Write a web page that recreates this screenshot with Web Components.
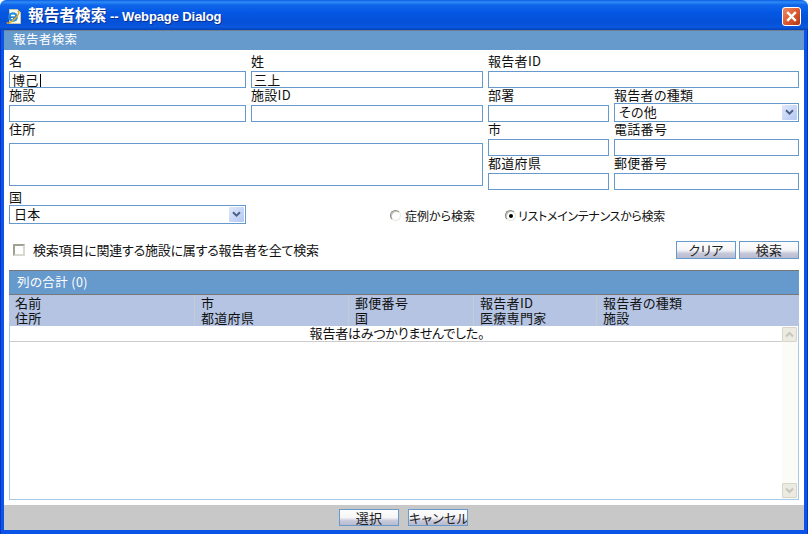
<!DOCTYPE html>
<html lang="ja"><head><meta charset="utf-8">
<style>
html,body{margin:0;padding:0;width:808px;height:534px;overflow:hidden;background:#fff}
body{font:13px/15px "Noto Sans CJK JP","Liberation Sans",sans-serif;color:#111;font-feature-settings:"palt"}
</style></head><body>
<x-dialog>
  <x-titlebar slot="title">報告者検索</x-titlebar>
  <x-band>報告者検索</x-band>
  <x-form>
    <x-field label="名" value="博己" caret></x-field>
    <x-field label="姓" value="三上"></x-field>
    <x-field label="報告者ID" style="grid-column:span 2"></x-field>
    <x-field label="施設"></x-field>
    <x-field label="施設ID"></x-field>
    <x-field label="部署"></x-field>
    <x-field label="報告者の種類" kind="select" value="その他"></x-field>
    <x-field label="住所" kind="area" style="grid-column:span 2;grid-row:span 2"></x-field>
    <x-field label="市"></x-field>
    <x-field label="電話番号"></x-field>
    <x-field label="都道府県"></x-field>
    <x-field label="郵便番号"></x-field>
    <x-field label="国" kind="select" value="日本"></x-field>
    <x-radios style="grid-column:span 3"></x-radios>
  </x-form>
  <x-actions></x-actions>
  <x-results></x-results>
  <x-footer></x-footer>
</x-dialog>
<script>
function def(name, css, html, init){
  customElements.define(name, class extends HTMLElement{
    constructor(){super();const s=this.attachShadow({mode:"open"});
      s.innerHTML="<style>"+css+"</style>"+(typeof html==="function"?html(this):html);}
    connectedCallback(){ if(init) init(this); }
  });
}
def("x-dialog",`:host{display:flex;flex-direction:column;width:808px;height:534px;box-sizing:border-box;background:#fff;overflow:hidden}
 .body{flex:1;min-height:0;padding:0 4px 4px;display:flex;background:
   linear-gradient(90deg,#0831c8 0 1px,#0a55e8 1px 4px,#0a55e8 804px,#0a55e8 807px,#0831c8 807px)}
 .in{flex:1;min-width:0;display:flex;flex-direction:column;background:#fff}
 `,`<slot name="title"></slot><div class="body"><div class="in"><slot></slot></div></div>`);
def("x-titlebar",`:host{display:flex;align-items:center;height:30px;box-sizing:border-box;padding:2px 5px 0 6px;gap:6px;color:#fff;
   background:linear-gradient(#0a5ae0 0,#2f8cf6 2px,#0f66ea 5px,#0558e4 12px,#0450d6 22px,#0a58e0 27px,#0342b8 30px);border-radius:6px 6px 0 0;}
 .t{font:bold 15.7px/20px "Noto Sans CJK JP",sans-serif;text-shadow:1px 1px 0 #0a2f90;white-space:nowrap;flex:1}
 .w{font:bold 13px/20px "Liberation Sans",sans-serif;letter-spacing:-.1px}
 svg{display:block;flex:none}
 .x{width:19px;height:19px;margin-right:2px}`,
 `<svg width="16" height="17" viewBox="0 0 16 17"><path d="M3.5 1.5h8l3 3v11h-11z" fill="#fbfbf0" stroke="#c9c7a8"/><circle cx="7" cy="9" r="4.8" fill="#2a8fd8"/><circle cx="7" cy="9" r="2.4" fill="#fff"/><path d="M3 8.4h8v1.5H3z" fill="#1b70c0"/><path d="M7 10h4.5l-1 2.6-3 1z" fill="#2a8fd8"/><path d="M.8 14.5c1.2 1.6 5 0 9.6-5.4 3-3.6 3.2-5.8 1-5.8" fill="none" stroke="#e8a820" stroke-width="1.4"/></svg>
 <div class="t"><slot></slot> <span class="w">-- Webpage Dialog</span></div>
 <svg class="x" viewBox="0 0 19 19"><defs><linearGradient id="r" x1="0" y1="0" x2="1" y2="1"><stop offset="0" stop-color="#ee8f6a"/><stop offset=".5" stop-color="#dd5a30"/><stop offset="1" stop-color="#b03410"/></linearGradient></defs><rect x=".5" y=".5" width="18" height="18" rx="2.5" fill="url(#r)" stroke="#fff"/><path d="M5.2 5.2l8.6 8.6M13.8 5.2l-8.6 8.6" stroke="#fff" stroke-width="2.4"/></svg>`);
def("x-band",`:host{display:block;height:20px;box-sizing:border-box;padding:0 0 0 9px;background:#6699cc;color:#fff;font-size:12.5px;line-height:15px;border-top:1px solid #6f7f90;letter-spacing:.4px}`,`<slot></slot>`);
def("x-form",`:host{display:grid;grid-template-columns:237px 232px 121px 185px;column-gap:5px;padding:4px 5px 0 5px;grid-template-rows:34px 34px 34px 34px 34px}`,`<slot></slot>`);
def("x-field",`:host{display:flex;flex-direction:column;min-width:0}
 label{display:block;height:17px;line-height:14px;white-space:nowrap;letter-spacing:.3px}
 .box{box-sizing:border-box;height:17px;flex:none;border:1px solid #6699cc;background:#fff;display:flex;align-items:center;padding:0 0 0 2px;line-height:15px;letter-spacing:.3px;overflow:hidden}
 .area{height:43px;margin-top:4px}
 .sl{height:16px}
 .sel{height:19px;padding:0 1px 0 4px}
 .v{flex:1;white-space:nowrap;margin-top:-2px}
 .c{display:inline-block;width:1px;height:13px;background:#000;vertical-align:-2px;margin-left:1px}
 .arrow{width:15px;height:15px;background:linear-gradient(135deg,#dfe8fb,#b4c8f4);border-radius:1px;display:flex;align-items:center;justify-content:center}
 svg{display:block}`,
 (h)=>{const k=h.getAttribute("kind"),v=h.getAttribute("value")||"",l=h.getAttribute("label");
  const cr=h.hasAttribute("caret")?'<i class="c"></i>':'';
  if(k==="select")return `<label class="sl">${l}</label><div class="box sel"><span class="v">${v}</span><span class="arrow"><svg width="9" height="7" viewBox="0 0 9 7"><path d="M1 1.2l3.5 3.5L8 1.2" fill="none" stroke="#4d6185" stroke-width="2"/></svg></span></div>`;
  if(k==="area")return `<label>${l}</label><div class="box area"></div>`;
  return `<label>${l}</label><div class="box"><span class="v" style="margin-top:0">${v}${cr}</span></div>`;});
def("x-radios",`:host{display:flex;align-items:center;padding:17px 0 0 139px;font-size:12px;height:17px}
 .r{display:flex;align-items:center;white-space:nowrap}
 .a{gap:4px;margin-right:30px}.b{gap:2px}
 .b span{letter-spacing:-.3px}
 i{display:block;flex:none;width:11px;height:11px;border-radius:50%;box-sizing:border-box;background:#fff;border:1px solid;border-color:#8a8a80 #e8e8e0 #e8e8e0 #8a8a80;box-shadow:inset 1px 1px 0 #c8c6bc;position:relative}
 i.on::after{content:"";position:absolute;left:3px;top:3px;width:4px;height:4px;border-radius:50%;background:#000}`,
 `<div class="r a"><i></i><span>症例から検索</span></div><div class="r b"><i class="on"></i><span>リストメインテナンスから検索</span></div>`);
def("x-button",`:host{display:inline-block}
 div{box-sizing:border-box;width:60px;height:var(--h,18px);border:1px solid #6699cc;background:linear-gradient(#fdfdfd 0,#f6f6f8 50%,#c6c8da 72%,#b8bbd0 100%);text-align:center;line-height:15px;color:#222;white-space:nowrap;overflow:hidden;letter-spacing:.2px}`,`<div><slot></slot></div>`);
def("x-actions",`:host{display:flex;align-items:center;height:46px;padding:5px 5px 0 9px;box-sizing:border-box;gap:3px}
 .chk{display:flex;align-items:center;gap:8px;flex:1;letter-spacing:-.22px;white-space:nowrap}
 i{display:block;width:12px;height:12px;box-sizing:border-box;background:#fff;border:2px solid;border-color:#a0a094 #d8d8d0 #d8d8d0 #a0a094}`,
 `<div class="chk"><i></i><span>検索項目に関連する施設に属する報告者を全て検索</span></div><x-button>クリア</x-button><x-button>検索</x-button>`);
def("x-results",`:host{display:flex;flex-direction:column;flex:1;min-height:0;margin:0 5px}
 .band{height:25px;flex:none;box-sizing:border-box;background:#6699cc;color:#fff;border-top:1px solid #777;border-bottom:1px solid #777;padding:2px 0 0 8px;line-height:17px;font-size:12.5px;letter-spacing:.4px}
 .head{display:grid;flex:none;grid-template-columns:186px 154px 125px 123px 1fr;height:31px;background:#b4c4e2;line-height:15px;letter-spacing:.3px}
 .head>div{padding:0 0 0 6px;border-right:1px solid #c4ccd0;white-space:pre-line}
 .head>div:last-child{border-right:0}
 .list{flex:1;min-height:0;position:relative;border:1px solid #a8c8e8;border-top:0;display:flex;flex-direction:column;background:#fff;margin-bottom:5px}
 .msg{height:15px;border-bottom:1px solid #ccc;text-align:center;line-height:14px;letter-spacing:-.2px;padding-right:14px}
 .sb{position:absolute;right:0;top:0;bottom:0;width:16px;box-sizing:border-box;display:flex;flex-direction:column;justify-content:space-between;background:#fbfbf8;padding:1px 0}
 .btn{height:15px;margin:0 1px 0 0;background:#ecebe2;border:1px solid #d8d6c8;box-sizing:border-box;display:flex;align-items:center;justify-content:center;border-radius:1px}`,
 `<div class="band">列の合計 (0)</div>
 <div class="head"><div>名前
住所</div><div>市
都道府県</div><div>郵便番号
国</div><div>報告者ID
医療専門家</div><div>報告者の種類
施設</div></div>
 <div class="list"><div class="msg">報告者はみつかりませんでした。</div>
  <div class="sb"><div class="btn"><svg width="9" height="7" viewBox="0 0 9 7"><path d="M1 5.5L4.5 2 8 5.5" fill="none" stroke="#c8c6b8" stroke-width="2"/></svg></div><div class="btn"><svg width="9" height="7" viewBox="0 0 9 7"><path d="M1 1.5L4.5 5 8 1.5" fill="none" stroke="#c8c6b8" stroke-width="2"/></svg></div></div></div>`);
def("x-footer",`:host{display:flex;justify-content:center;align-items:flex-start;padding:4px 1px 0 0;box-sizing:border-box;gap:9px;height:25px;background:#c8c8c8;flex:none;--h:17px}`,`<x-button>選択</x-button><x-button>キャンセル</x-button>`);
</script>
</body></html>
